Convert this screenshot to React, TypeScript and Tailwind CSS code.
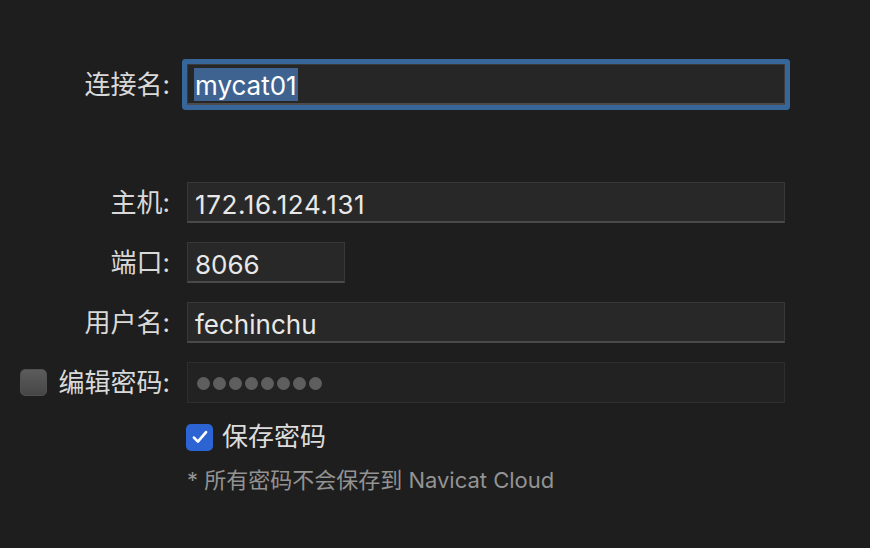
import React from 'react';

const font = { fontFamily: 'Inter, "Noto Sans CJK SC", sans-serif' };

const Label: React.FC<{ text: string }> = ({ text }) => (
  <div className="w-[172px] shrink-0 pr-[2px] text-right text-[26px] leading-[41px] text-[#d9d9d9]">{text}</div>
);

const Field: React.FC<{ value: string; width?: string; tracking?: string }> = ({ value, width = 'w-[598px]', tracking = '' }) => (
  <div
    className={`${width} ${tracking} h-[41px] ml-[15px] flex items-center pl-[7px] pt-[4px] bg-[#282828] border border-[#383838] border-b-2 border-b-[#4a4a4a] text-[26px] text-[#e8e8e8]`}
  >
    {value}
  </div>
);

export default function App() {
  return (
    <div className="w-[870px] h-[548px] bg-[#1e1e1e] overflow-hidden pt-[64px]" style={font}>
      {/* connection name, focused */}
      <div className="flex items-center">
        <Label text="连接名:" />
        <div className="w-[598px] h-[41px] ml-[15px] flex items-center pl-[6px] pt-[1px] bg-[#262626] border border-[#3a3a3a] border-b-2 border-b-[#4c4c4c] rounded-[1px] ring-[5px] ring-[#36669a]">
          <span className="bg-[#3e6391] text-white text-[26px] leading-[31px] pt-[2px] px-[1px]">mycat01</span>
        </div>
      </div>

      <div className="mt-[77px] flex flex-col gap-[19px]">
        <div className="flex items-center">
          <Label text="主机:" />
          <Field value="172.16.124.131" tracking="tracking-[0.6px]" />
        </div>
        <div className="flex items-center">
          <Label text="端口:" />
          <Field value="8066" width="w-[158px]" />
        </div>
        <div className="flex items-center">
          <Label text="用户名:" />
          <Field value="fechinchu" />
        </div>
        <div className="flex items-center">
          <div className="w-[172px] shrink-0 flex items-center pl-[20px] pr-[2px]">
            <div className="w-[27px] h-[27px] rounded-[5px] bg-gradient-to-b from-[#5c5c5c] to-[#464646] border border-[#505050]" />
            <div className="flex-1 text-right text-[26px] leading-[41px] text-[#d9d9d9]">编辑密码:</div>
          </div>
          <div className="w-[598px] h-[41px] ml-[15px] flex items-center gap-[3.5px] pl-[9px] pt-[2px] bg-[#222222] border border-[#2e2e2e]">
            {Array.from({ length: 8 }).map((_, i) => (
              <span key={i} className="w-[12.5px] h-[12.5px] rounded-full bg-[#5e5e5e]" />
            ))}
          </div>
        </div>
        <div className="flex items-center pl-[186px]">
          <div className="w-[27px] h-[27px] rounded-[5px] bg-[#2d64d4] flex items-center justify-center">
            <svg width="22" height="22" viewBox="0 0 16 16" fill="none">
              <path d="M3.6 8.4l2.9 3L12.4 4.4" stroke="white" strokeWidth="1.9" strokeLinecap="round" strokeLinejoin="round" />
            </svg>
          </div>
          <span className="ml-[9px] text-[26px] leading-[30px] text-[#dcdcdc]">保存密码</span>
        </div>
      </div>

      <div className="mt-[13px] pl-[187px] text-[22px] leading-[30px] text-[#939393]">* 所有密码不会保存到 Navicat Cloud</div>
    </div>
  );
}
